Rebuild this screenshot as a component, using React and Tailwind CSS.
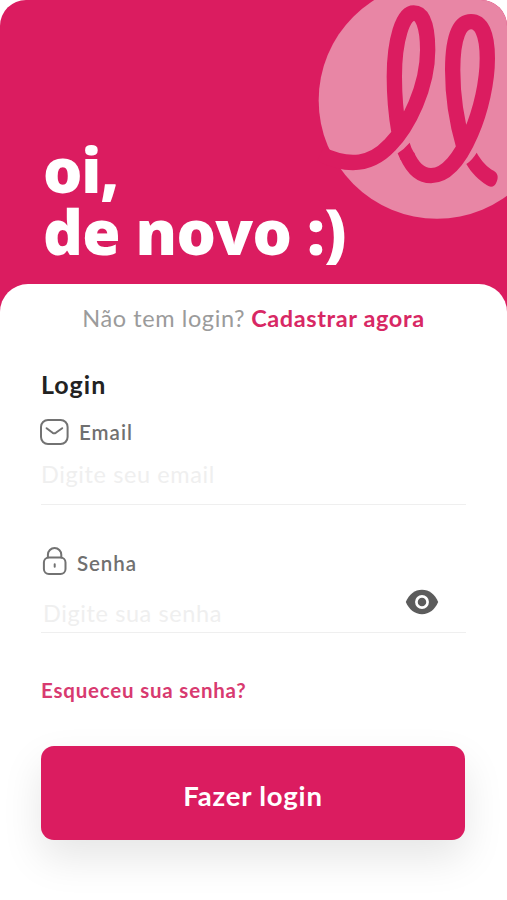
import React, { useState } from "react";

// brand mark, two cursive loops over a soft disc
const Logo = ({ className }) => (
  <svg viewBox="0 0 600 690" fill="none" className={className}>
    <circle cx="390" cy="301" r="355" fill="#e886a5" />
    <g stroke="#db1c60" strokeWidth="46">
      <path d="M40 462C130 505 196 492 248 436C305 378 362 260 362 150C362 80 347 39 320 39C288 39 262 120 262 230C262 290 268 350 276 396" />
      <path d="M300 466C318 506 342 527 372 527C420 527 462 470 492 400C522 330 541 245 541 175C541 100 522 65 492 65C458 65 437 110 437 210C437 300 450 370 470 438" />
    </g>
    <g fill="#db1c60">
      <path d="M308 428Q312 444 323 462L281 480Q276 470 272 460Q292 447 308 428Z" />
      <path d="M509 458C524 484 541 502 560 512C572 519 575 530 569 545C564 560 552 564 540 556C515 540 495 521 478 492Q496 480 509 458Z" />
    </g>
  </svg>
);

const MailIcon = () => (
  <svg
    viewBox="0 0 30 28"
    fill="none"
    stroke="#727272"
    strokeWidth="2"
    strokeLinecap="round"
    strokeLinejoin="round"
    className="h-[28px] w-[30px]"
  >
    <rect x="2" y="2" width="26.6" height="24" rx="7" />
    <path d="M7.6 10.2l6 4.600q1.600 1 3.200 0l6.400-4.600" />
  </svg>
);

const LockIcon = () => (
  <svg
    viewBox="0 0 26 30"
    fill="none"
    stroke="#727272"
    strokeWidth="2"
    strokeLinecap="round"
    className="h-[30px] w-[26px]"
  >
    <rect x="2.9" y="10.6" width="21.6" height="16.400" rx="5" />
    <path d="M6.9 10.600V7.700a6.700 6.700 0 0 1 13.400 0v2.900M13.700 17.200v2.600" />
  </svg>
);

const EyeIcon = () => (
  <svg viewBox="0 0 34 26" className="h-[26px] w-[34px]">
    <path
      d="M.8 13C4.100 5.400 9.800.8 17 .8S29.900 5.400 33.200 13C29.900 20.600 24.200 25.200 17 25.200S4.100 20.600.8 13z"
      fill="#5c5c5c"
    />
    <circle cx="17" cy="13" r="5.6" fill="#5c5c5c" stroke="#fff" strokeWidth="2.7" />
  </svg>
);

const App = () => {
  const [showPassword, setShowPassword] = useState(false);

  return (
    <div className="h-[900px] w-[507px] overflow-hidden bg-white font-['Lato',sans-serif]">
      <header className="relative h-[312px] overflow-hidden rounded-t-[26px] bg-[#db1c60] pt-[138px] pl-[43px]">
        <Logo className="absolute top-0 right-0 h-[230px] w-[200px]" />
        <h1 className="relative font-['Open_Sans',sans-serif] text-[62px] leading-[62px] font-extrabold whitespace-nowrap text-white">
          <span className="block tracking-[-1.2px]">oi,</span>
          <span className="block tracking-[-0.6px]">de novo :)</span>
        </h1>
      </header>

      <main className="relative -mt-[28px] h-[616px] rounded-t-[28px] bg-white px-[41px] pt-[20px]">
        <p className="flex h-[30px] items-center justify-center gap-[6px] text-[23.5px] whitespace-nowrap">
          <span className="tracking-[0.6px] text-[#9b9b9b]">Não tem login?</span>
          <a href="#" className="font-bold tracking-[0.6px] text-[#d82864]">
            Cadastrar agora
          </a>
        </p>

        <form onSubmit={(e) => e.preventDefault()}>
          <h2 className="mt-[35px] h-[31px] text-[25px] leading-[30px] font-bold tracking-[1px] text-[#222]">
            Login
          </h2>

          <div className="mt-[13px] border-b border-[#efefef]">
            <label
              htmlFor="email"
              className="-ml-[2px] flex h-[38px] items-center gap-[10px] text-[20.5px] font-semibold tracking-[1px] text-[#707070]"
            >
              <MailIcon />
              Email
            </label>
            <input
              id="email"
              type="email"
              placeholder="Digite seu email"
              className="mt-[7px] block h-[34px] w-full text-[23.5px] tracking-[0.6px] outline-none placeholder:text-[#efefef]"
            />
            <div className="h-[12px]" />
          </div>

          <div className="mt-[39px] border-b border-[#efefef]">
            <label
              htmlFor="senha"
              className="flex h-[36px] items-center gap-[10px] text-[20.5px] font-semibold tracking-[0.9px] text-[#707070]"
            >
              <LockIcon />
              <span className="pt-[2px]">Senha</span>
            </label>
            <div className="mt-[5px] flex h-[47px] justify-between pr-[27px]">
              <input
                id="senha"
                type={showPassword ? "text" : "password"}
                placeholder="Digite sua senha"
                className="mt-[12px] ml-[2px] h-[34px] w-[260px] text-[23.5px] tracking-[0.6px] outline-none placeholder:text-[#efefef]"
              />
              <button
                type="button"
                aria-label="Mostrar senha"
                className="h-[34px]"
                onClick={() => setShowPassword(!showPassword)}
              >
                <EyeIcon />
              </button>
            </div>
          </div>

          <a
            href="#"
            className="mt-[42px] block h-[30px] text-[20.5px] leading-[30px] font-bold tracking-[0.8px] text-[#d83a70]"
          >
            Esqueceu sua senha?
          </a>

          <button className="mt-[41px] flex h-[94px] w-[424px] items-center justify-center rounded-[13px] bg-[#db1c60] pt-[6px] text-[27.5px] font-bold tracking-[0.8px] text-white shadow-[0_18px_40px_rgba(0,0,0,0.1)]">
            Fazer login
          </button>
        </form>
      </main>
    </div>
  );
};

export default App;
